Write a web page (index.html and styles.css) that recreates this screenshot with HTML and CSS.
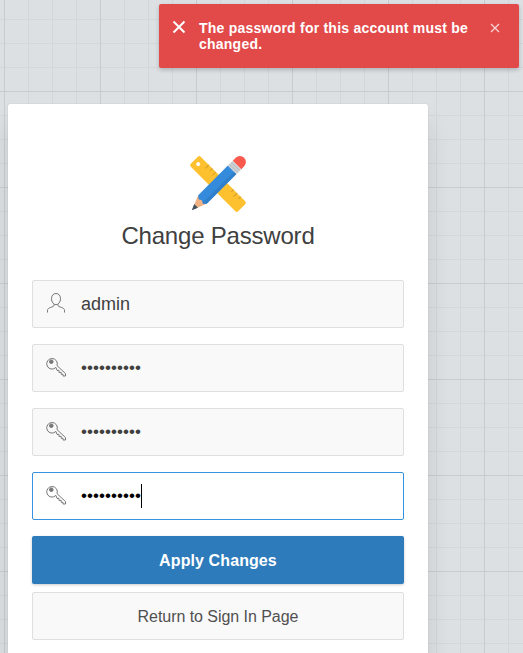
FILE: index.html
```html
<!DOCTYPE html>
<html lang="en">
<head>
<meta charset="utf-8">
<title>Change Password</title>
<link rel="stylesheet" href="styles.css">
</head>
<body>
<svg width="0" height="0" class="defs" aria-hidden="true">
  <symbol id="key" viewBox="0 0 22 22">
    <path d="M10.9 11.4A5.3 5.3 0 1 1 12 9.6L20.5 17.6V20H18V18.3H16.2V16.4H14V14.4H12Z"/>
    <circle cx="6.3" cy="5.7" r="1.8" class="hole"/>
  </symbol>
  <symbol id="user" viewBox="0 0 22 22">
    <path d="M11 1.5C8.1 1.5 6.5 3.8 6.5 6.7C6.5 10 8.4 12.7 11 12.7S15.5 10 15.5 6.7C15.5 3.8 13.9 1.5 11 1.5ZM9 12.3V13.5C9 15.4 2.5 15 2.5 18.3V20.5M13 12.3V13.5C13 15.4 19.5 15 19.5 18.3V20.5"/>
  </symbol>
</svg>
<div class="alert" role="alert">
  <svg class="alert-icon" viewBox="0 0 14 14"><path d="M1.5 1.5L12.5 12.5M12.5 1.5L1.5 12.5"/></svg>
  <p>The password for this account must be changed.</p>
  <svg class="alert-close" viewBox="0 0 10 10"><path d="M1 1L9 9M9 1L1 9"/></svg>
</div>
<main class="card">
  <svg class="logo" viewBox="0 0 56 56">
    <g transform="rotate(45 28 28)">
      <rect x="-5.5" y="21" width="67" height="14" rx="2" fill="#fdc02f"/>
      <circle cx="0" cy="28" r="2" fill="#fff"/>
      <path d="M8 21V26M13 21V24M18 21V26M43 21V24M48 21V26M53 21V24" stroke="#d39e2c" stroke-width="1"/>
    </g>
    <g transform="rotate(-45 28 28)">
      <path d="M-9 28L6 22V34Z" fill="#f0b285"/>
      <path d="M-9 28L-3 25.4V30.6Z" fill="#3e5263"/>
      <path d="M6 22H48V34H6L3.5 31L5 28L3.5 25Z" fill="#348bdc"/>
      <path d="M6 30.5H48V34H6L3.5 31Z" fill="#2f7fca"/>
      <path d="M48 22H55V34H48Z" fill="#cdd1d4"/>
      <path d="M50.2 22V34M52.7 22V34" stroke="#aeb3b8" stroke-width=".7"/>
      <path d="M55 22H59A6 6 0 0 1 59 34H55Z" fill="#fa5a4e"/>
    </g>
  </svg>
  <h1>Change Password</h1>
  <div class="field"><svg><use href="#user"/></svg><span>admin</span></div>
  <div class="field"><svg><use href="#key"/></svg><span class="dots">••••••••••</span></div>
  <div class="field"><svg><use href="#key"/></svg><span class="dots">••••••••••</span></div>
  <div class="field focused"><svg><use href="#key"/></svg><span class="dots">••••••••••</span><i class="caret"></i></div>
  <button class="primary">Apply Changes</button>
  <button class="secondary">Return to Sign In Page</button>
</main>
</body>
</html>
```

FILE: styles.css
```css
* { box-sizing: border-box; }
html { height: 100%; overflow: hidden; }
body {
  margin: 0;
  height: 653px;
  padding: 104px 0 0 8px;
  overflow: hidden;
  font-family: "Liberation Sans", Arial, sans-serif;
  color: #404040;
  background-color: #dce0e3;
  background-image:
    linear-gradient(90deg, #c8ccce 1px, transparent 1px),
    linear-gradient(#c8ccce 1px, transparent 1px),
    linear-gradient(90deg, #d3d7da 1px, transparent 1px),
    linear-gradient(#d3d7da 1px, transparent 1px);
  background-size: 96px 96px, 96px 96px, 24px 24px, 24px 24px;
  background-position: 4px 0, 0 91px, 4px 0, 0 19px;
}
.defs { position: absolute; }
.alert {
  position: absolute;
  top: 4px;
  left: 159px;
  width: 360px;
  height: 64px;
  padding: 16px 16px 16px 13px;
  display: flex;
  align-items: flex-start;
  border-radius: 2px;
  background: rgba(226, 68, 68, .97);
  box-shadow: 0 2px 4px rgba(0, 0, 0, .2);
  color: #fff;
}
.alert p {
  width: 280px;
  margin: 0 11px 0 13px;
  font-size: 14px;
  line-height: 16px;
  font-weight: bold;
  letter-spacing: .23px;
}
.alert svg { fill: none; stroke: #fff; flex: none; }
.alert-icon { width: 14px; height: 14px; stroke-width: 2; }
.alert-close { width: 10px; height: 10px; margin-top: 3px; stroke-width: 1.4; opacity: .75; }
.card {
  width: 420px;
  height: 549px;
  padding: 52px 24px 0;
  display: flex;
  flex-direction: column;
  background: #fff;
  border-radius: 2px 2px 0 0;
  box-shadow: 0 0 1px rgba(0, 0, 0, .25), 0 20px 24px rgba(0, 0, 0, .1);
}
.logo { width: 56px; height: 56px; margin: 0 auto; flex: none; overflow: visible; }
h1 {
  margin: 8px 0 28px;
  font-size: 24px;
  line-height: 32px;
  font-weight: normal;
  text-align: center;
  letter-spacing: -.2px;
}
.field {
  flex: none;
  height: 48px;
  margin-bottom: 16px;
  padding-left: 12px;
  display: flex;
  align-items: center;
  border: 1px solid #dfdfdf;
  border-radius: 2px;
  background: #f9f9f9;
  font-size: 18px;
}
.field svg {
  width: 22px;
  height: 22px;
  margin: 0 14px 2px 0;
  fill: none;
  stroke: #777;
  stroke-width: 1;
}
.hole { fill: #777; }
.dots { font-size: 17px; letter-spacing: .05px; opacity: .999; }
.focused { border-color: #3793e0; background: #fff; color: #000; }
.caret { width: 1px; height: 24px; background: #000; }
button {
  flex: none;
  height: 48px;
  padding: 2px 0 0;
  border: 0;
  border-radius: 2px;
  font: 16px/24px "Liberation Sans", Arial, sans-serif;
}
.primary {
  margin-bottom: 8px;
  background: #2d7bbb;
  color: #fff;
  font-weight: bold;
  letter-spacing: .1px;
  box-shadow: 0 1px 3px rgba(0, 0, 0, .2);
}
.secondary { border: 1px solid #dfdfdf; background: #f9f9f9; color: #505050; letter-spacing: -.05px; }
```
